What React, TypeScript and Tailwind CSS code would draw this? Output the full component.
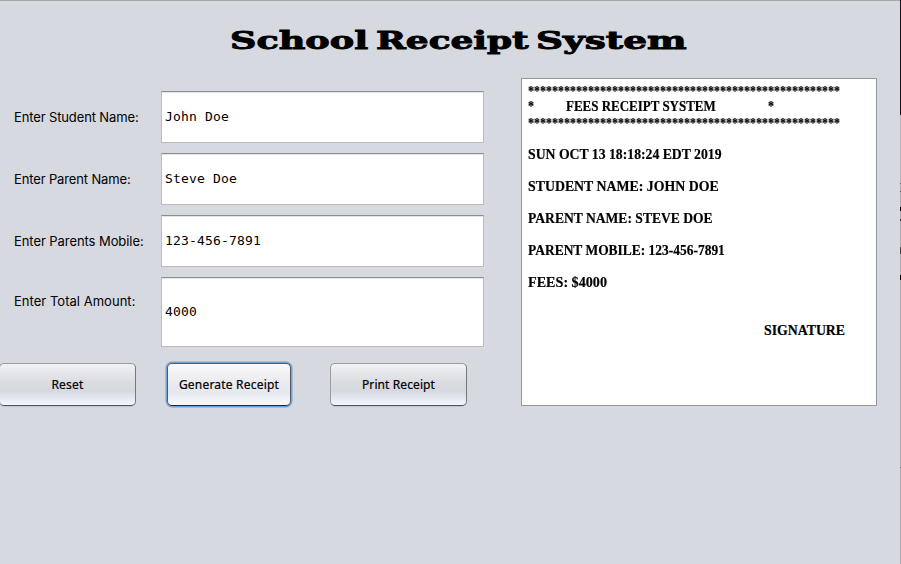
const fields = [
  { label: "Enter Student Name:", value: "John Doe", box: "h-[52px]", lab: "tracking-[-0.13px]", pad: "pt-px" },
  { label: "Enter Parent Name:", value: "Steve Doe", box: "h-[52px]", lab: "tracking-[-0.14px]", pad: "pt-px" },
  { label: "Enter Parents Mobile:", value: "123-456-7891", box: "h-[52px]", lab: "tracking-[-0.07px]", pad: "pt-px" },
  { label: "Enter Total Amount:", value: "4000", box: "h-[70px]", lab: "tracking-[0.03px]", pad: "pb-[21px]" },
];

const lines = [
  { text: "SUN OCT 13 18:18:24 EDT 2019", scale: "scale-x-[0.915]" },
  { text: "STUDENT NAME: JOHN DOE", scale: "scale-x-[0.922]" },
  { text: "PARENT NAME: STEVE DOE", scale: "scale-x-[0.905]" },
  { text: "PARENT MOBILE: 123-456-7891", scale: "scale-x-[0.897]" },
  { text: "FEES: $4000", scale: "scale-x-[0.943]" },
];

const STARS = "*".repeat(52);

const buttonBase =
  "flex h-[43px] items-center justify-center rounded-[5px] border font-['Noto_Sans',sans-serif] text-[12px] text-black [-webkit-text-stroke:0.2px_black]";
const plain =
  "border-[#9b9da3] border-r-[#75777d] border-b-[#50535a] bg-[linear-gradient(180deg,#f1f2f5_0%,#dcdee1_40%,#d5d8df_65%,#f3f6fd_100%)] shadow-[0_1px_0_#c0c4ca]";

export default function App() {
  return (
    <div className="flex h-[564px] w-[901px] overflow-hidden bg-[#d6d9e0]">
      <div className="flex w-[900px] flex-col border-t border-[#a4a6aa]">
        <h1 className="flex h-[77px] items-center pt-[3px] pl-[230px] font-['DejaVu_Serif',serif] text-[24px] leading-[28px] font-bold whitespace-nowrap text-black [-webkit-text-stroke:0.9px_black]">
          <span className="w-[146px]"><span className="inline-block origin-left scale-x-[1.525]">School</span>{" "}</span>
          <span className="w-[160px]"><span className="inline-block origin-left scale-x-[1.495]">Receipt</span>{" "}</span>
          <span className="inline-block origin-left scale-x-[1.56]">System</span>
        </h1>
        <div className="flex">
          <div className="flex w-[521px] flex-col">
            <div className="flex flex-col gap-[10px] pt-[13px]">
              {fields.map((f) => (
                <div key={f.label} className="flex">
                  <label className={`flex w-[161px] items-center pl-[14px] font-['Inter',sans-serif] text-[13px] whitespace-nowrap text-black ${f.lab} ${f.pad}`}>
                    {f.label}
                  </label>
                  <div className={`flex w-[323px] items-center border border-[#bcbcbc] border-t-[#8c8d90] bg-white pb-px pl-[3px] font-['DejaVu_Sans_Mono',monospace] text-[13px] tracking-[0.17px] text-black shadow-[inset_0_1px_0_#e6e6e6] ${f.box}`}>
                    {f.value}
                  </div>
                </div>
              ))}
            </div>
            <div className="flex pt-[16px]">
              <button className={`${buttonBase} ${plain} -ml-px w-[137px] tracking-[0.2px]`}>Reset</button>
              <button className={`${buttonBase} ml-[31px] w-[124px] border-[#555b66] border-b-[#22262e] bg-[linear-gradient(180deg,#fafafc_0%,#ebecef_40%,#e5e8ef_70%,#fafcff_100%)] tracking-[0.2px] shadow-[0_0_0_1.5px_#70a3d4]`}>
                Generate Receipt
              </button>
              <button className={`${buttonBase} ${plain} ml-[39px] w-[137px] tracking-[0.1px]`}>Print Receipt</button>
            </div>
          </div>
          <div className="h-[328px] w-[356px] border border-[#9297a1] bg-white pt-[2px] pl-[6px] font-['Liberation_Serif',serif] text-[15px] leading-4 font-bold whitespace-nowrap text-black [-webkit-text-stroke:0.2px_black]">
            <div className="h-4 pt-[2px]"><span className="inline-block origin-left scale-x-[0.8] will-change-transform">{STARS}</span></div>
            <div className="flex h-4 pt-[1px]">
              <span className="w-[38px]"><span className="inline-block origin-left scale-x-[0.8]">*</span></span>
              <span className="w-[202px]"><span className="inline-block origin-left scale-x-[0.865]">FEES RECEIPT SYSTEM</span></span>
              <span className="inline-block origin-left scale-x-[0.8]">*</span>
            </div>
            <div className="h-4 pt-[2px]"><span className="inline-block origin-left scale-x-[0.8] will-change-transform">{STARS}</span></div>
            <div className="flex flex-col gap-4 pt-[17px]">
              {lines.map((l) => (
                <div key={l.text} className="h-4">
                  <span className={`inline-block origin-left ${l.scale}`}>{l.text}</span>
                </div>
              ))}
            </div>
            <div className="pt-8 pl-[236px]">
              <span className="inline-block origin-left scale-x-[0.92]">SIGNATURE</span>
            </div>
          </div>
        </div>
      </div>
      <div className="flex w-px flex-col bg-[#a9abae]">
        <div className="h-[115px] bg-[#111317]" />
        <div className="h-[68px] bg-[#b5b7ba]" />
        <div className="h-px bg-[#555555]" />
        <div className="mt-[7px] h-px bg-[#444444]" />
        <div className="mt-[15px] h-[4px] bg-black" />
        <div className="mt-[8px] h-[2px] bg-[#333333]" />
        <div className="mt-[26px] h-[7px] bg-[#444444]" />
        <div className="mt-[21px] h-[5px] bg-black" />
        <div className="mt-[187px] h-px bg-[#686a6e]" />
      </div>
    </div>
  );
}
